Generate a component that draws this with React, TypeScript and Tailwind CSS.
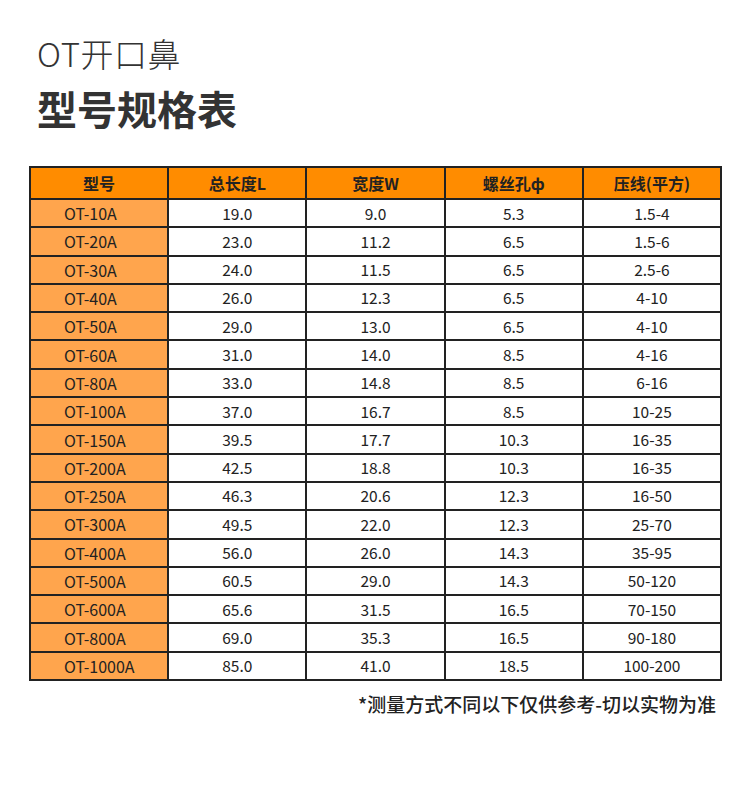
const headers = ["型号", "总长度L", "宽度W", "螺丝孔ф", "压线(平方)"];

const rows: string[][] = [
  ["OT-10A", "19.0", "9.0", "5.3", "1.5-4"],
  ["OT-20A", "23.0", "11.2", "6.5", "1.5-6"],
  ["OT-30A", "24.0", "11.5", "6.5", "2.5-6"],
  ["OT-40A", "26.0", "12.3", "6.5", "4-10"],
  ["OT-50A", "29.0", "13.0", "6.5", "4-10"],
  ["OT-60A", "31.0", "14.0", "8.5", "4-16"],
  ["OT-80A", "33.0", "14.8", "8.5", "6-16"],
  ["OT-100A", "37.0", "16.7", "8.5", "10-25"],
  ["OT-150A", "39.5", "17.7", "10.3", "16-35"],
  ["OT-200A", "42.5", "18.8", "10.3", "16-35"],
  ["OT-250A", "46.3", "20.6", "12.3", "16-50"],
  ["OT-300A", "49.5", "22.0", "12.3", "25-70"],
  ["OT-400A", "56.0", "26.0", "14.3", "35-95"],
  ["OT-500A", "60.5", "29.0", "14.3", "50-120"],
  ["OT-600A", "65.6", "31.5", "16.5", "70-150"],
  ["OT-800A", "69.0", "35.3", "16.5", "90-180"],
  ["OT-1000A", "85.0", "41.0", "18.5", "100-200"],
];

export default function App() {
  return (
    <div
      className="w-[750px] h-[809px] bg-white text-[#333]"
      style={{ fontFamily: '"Noto Sans CJK SC", "Noto Sans", sans-serif' }}
    >
      <div className="pl-[37px] pt-[33px]">
        <h1 className="text-[33px] font-light leading-[40px] tracking-[0.5px]">OT开口鼻</h1>
        <h2 className="text-[40px] font-bold leading-[50px] mt-[10px]">型号规格表</h2>
      </div>

      <div className="mt-[33px] ml-[29px] w-[693px] grid grid-cols-5 gap-[2px] p-[2px] bg-[#222]">
        {headers.map((h) => (
          <div
            key={h}
            className="h-[30px] bg-[#ff8c00] flex items-center justify-center text-[16px] font-bold text-[#222]"
          >
            {h}
          </div>
        ))}
        {rows.map((r) =>
          r.map((c, i) =>
            i === 0 ? (
              <div
                key={r[0] + i}
                className="h-[26.3px] flex items-center pl-[33px] bg-[#ffa54d] text-[16px] text-[#222]"
              >
                {c}
              </div>
            ) : (
              <div
                key={r[0] + i}
                className="h-[26.3px] flex items-center justify-center bg-white text-[15.5px] text-[#222]"
              >
                {c}
              </div>
            )
          )
        )}
      </div>

      <div className="w-[716px] mt-[10px] text-right text-[19px] font-medium leading-[26px] text-[#222]">
        *测量方式不同以下仅供参考-切以实物为准
      </div>
    </div>
  );
}
